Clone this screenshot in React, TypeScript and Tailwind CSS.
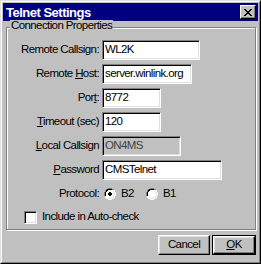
import React from "react";

const font = { fontFamily: '"Liberation Sans", Arial, sans-serif' };
const txt = "text-[11.5px] tracking-[-0.6px] leading-none whitespace-nowrap";

function Field({ value, width, disabled }: { value: string; width: string; disabled?: boolean }) {
  return (
    <div
      className={`h-[20px] ${width} border border-t-[#808080] border-l-[#808080] border-b-white border-r-white shadow-[inset_1px_1px_0_#000,inset_-1px_-1px_0_#dfdfdf] ${disabled ? "bg-[#c0c0c0] text-[#404040]" : "bg-white text-black"} flex items-center pl-[2px] ${txt} overflow-hidden`}
    >
      {value}
    </div>
  );
}

function Row({ label, children }: { label: React.ReactNode; children: React.ReactNode }) {
  return (
    <div className="flex h-[20px] items-center">
      <div className={`w-[95px] shrink-0 text-right pr-[3px] ${txt}`}>{label}</div>
      {children}
    </div>
  );
}

function Radio({ checked }: { checked?: boolean }) {
  return (
    <svg width="12" height="12" viewBox="0 0 12 12" className="shrink-0">
      <path d="M4 0h4v1h2v1h1v2h1v4h-1v2h-1v1h-2v1h-4v-1h-2v-1h-1v-2h-1v-4h1v-2h1v-1h2z" fill="#fff" />
      <path d="M4 0h4v1h2v1h-2v-1h-4v1h-2v2h-1v4h-1v-4h1v-2h1v-1h2z" fill="#808080" />
      <path d="M4 1h4v1h-4v1h-1v1h-1v4h-1v-4h1v-2h1v-1h1z" fill="#000" />
      <path d="M10 2h1v2h1v4h-1v2h-1v1h-2v1h-4v-1h4v-1h2v-2h1v-4h-1z" fill="#fff" />
      <path d="M9 3h1v1h1v4h-1v2h-2v1h-4v-1h4v-1h1v-1h1v-4h-1z" fill="#dfdfdf" />
      {checked && <path d="M5 4h2v1h1v2h-1v1h-2v-1h-1v-2h1z" fill="#000" />}
    </svg>
  );
}

export default function App() {
  return (
    <div className="w-[261px] h-[264px] bg-[#c0c0c0] text-black" style={font}>
      <div className="w-full h-full border border-t-[#dfdfdf] border-l-[#dfdfdf] border-b-black border-r-black">
        <div className="w-full h-full border border-t-white border-l-white border-b-[#808080] border-r-[#808080] p-[1px] flex flex-col">
          {/* Title bar */}
          <div className="h-[18px] shrink-0 bg-[#000080] flex items-center justify-between pl-[3px] pr-[2px]">
            <span className="text-white font-bold text-[13px] tracking-[-0.5px] leading-none whitespace-nowrap">Telnet Settings</span>
            <div className="w-[16px] h-[14px] bg-[#c0c0c0] border border-t-white border-l-white border-b-black border-r-black shadow-[inset_-1px_-1px_0_#808080] flex items-center justify-center">
              <svg width="8" height="7" viewBox="0 0 8 7">
                <path d="M0 0h2v1h1v1h2v-1h1v-1h2v1h-1v1h-1v1h-1v1h1v1h1v1h1v1h-2v-1h-1v-1h-2v1h-1v1h-2v-1h1v-1h1v-1h1v-1h-1v-1h-1v-1h-1z" fill="#000" />
              </svg>
            </div>
          </div>

          {/* Group box */}
          <div className="relative shrink-0 mt-[6px] ml-[3px] mr-[2px] h-[203px] border border-[#808080] shadow-[inset_1px_1px_0_#fff,1px_1px_0_#fff] pt-[12px]">
            <div className={`absolute -top-[8px] left-[3px] bg-[#c0c0c0] px-[1px] ${txt} leading-[15px]`}>Connection Properties</div>
            <div className="flex flex-col gap-[4px]">
              <Row label="Remote Callsign:"><Field value="WL2K" width="w-[98px]" /></Row>
              <Row label={<>Remote <u>H</u>ost:</>}><Field value="server.winlink.org" width="w-[90px]" /></Row>
              <Row label={<>Por<u>t</u>:</>}><Field value="8772" width="w-[59px]" /></Row>
              <Row label={<><u>T</u>imeout (sec)</>}><Field value="120" width="w-[59px]" /></Row>
              <Row label={<><u>L</u>ocal Callsign</>}><Field value="ON4MS" width="w-[79px]" disabled /></Row>
              <Row label={<><u>P</u>assword</>}><Field value="CMSTelnet" width="w-[120px]" /></Row>
              <Row label="Protocol:">
                <div className={`flex items-center pl-[2px] ${txt}`}>
                  <Radio checked />
                  <span className="ml-[5px]">B2</span>
                  <span className="ml-[12px] flex"><Radio /></span>
                  <span className="ml-[5px]">B1</span>
                </div>
              </Row>
              <div className="flex items-center h-[18px] pl-[17px]">
                <div className="w-[13px] h-[13px] bg-white border border-t-[#808080] border-l-[#808080] border-b-white border-r-white shadow-[inset_1px_1px_0_#000,inset_-1px_-1px_0_#dfdfdf]" />
                <span className={`ml-[5px] ${txt}`}>Include in Auto-check</span>
              </div>
            </div>
          </div>

          {/* Buttons */}
          <div className="flex justify-end items-center gap-[2px] mt-[5px] mr-[2px]">
            <button className={`w-[52px] h-[20px] bg-[#c0c0c0] border border-t-white border-l-white border-b-black border-r-black shadow-[inset_-1px_-1px_0_#808080,inset_1px_1px_0_#dfdfdf] ${txt}`}>Cancel</button>
            <div className="border border-black flex">
              <button className={`w-[42px] h-[18px] bg-[#c0c0c0] border border-t-white border-l-white border-b-black border-r-black shadow-[inset_-1px_-1px_0_#808080,inset_1px_1px_0_#dfdfdf] ${txt}`}><u>O</u>K</button>
            </div>
          </div>
        </div>
      </div>
    </div>
  );
}
